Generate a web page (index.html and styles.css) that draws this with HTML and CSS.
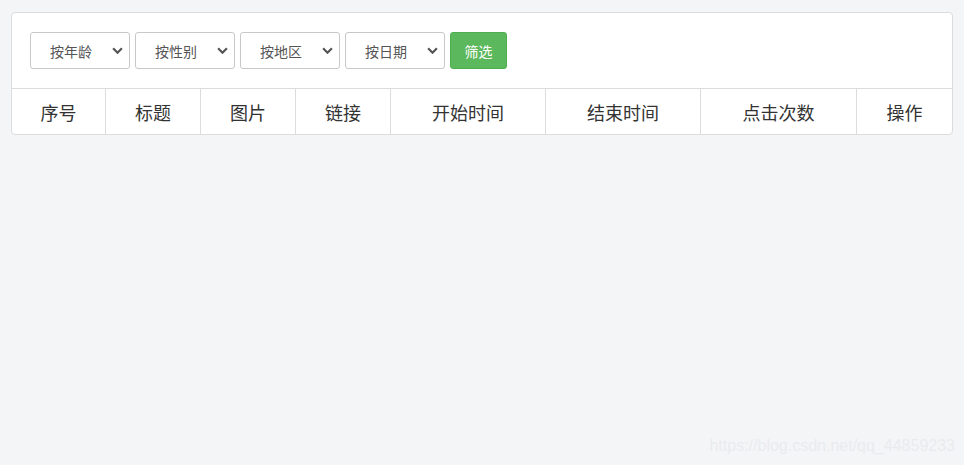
FILE: index.html
```html
<!DOCTYPE html>
<html lang="zh-CN">
<head>
    <meta charset="UTF-8">
    <meta name="viewport" content="width=device-width, initial-scale=1.0">
    <title>广告列表</title>
    <link rel="stylesheet" href="styles.css">
</head>
<body>
    <div class="panel">
        <div class="toolbar">
            <div class="select-box">
                <select><option>按年龄</option></select>
                <svg class="chevron" viewBox="0 0 10 6"><path d="M1 1l4 4 4-4" /></svg>
            </div>
            <div class="select-box">
                <select><option>按性别</option></select>
                <svg class="chevron" viewBox="0 0 10 6"><path d="M1 1l4 4 4-4" /></svg>
            </div>
            <div class="select-box">
                <select><option>按地区</option></select>
                <svg class="chevron" viewBox="0 0 10 6"><path d="M1 1l4 4 4-4" /></svg>
            </div>
            <div class="select-box">
                <select><option>按日期</option></select>
                <svg class="chevron" viewBox="0 0 10 6"><path d="M1 1l4 4 4-4" /></svg>
            </div>
            <button class="btn-filter">筛选</button>
        </div>
        <table class="list">
            <thead>
                <tr>
                    <th class="col-first">序号</th>
                    <th class="col-s">标题</th>
                    <th class="col-s">图片</th>
                    <th class="col-s">链接</th>
                    <th class="col-l">开始时间</th>
                    <th class="col-l">结束时间</th>
                    <th class="col-xl">点击次数</th>
                    <th>操作</th>
                </tr>
            </thead>
        </table>
    </div>
    <div class="watermark">https://blog.csdn.net/qq_44859233</div>
</body>
</html>
```

FILE: styles.css
```css
body {
    font-family: "Noto Sans CJK SC", "Noto Sans", sans-serif;
    background-color: #f4f5f7;
    margin: 0;
    padding: 12px 11px 0 11px;
    height: 465px;
    box-sizing: border-box;
    position: relative;
}
.panel {
    width: 942px;
    background-color: #fff;
    border: 1px solid #dcdcdc;
    border-radius: 4px;
    box-sizing: border-box;
    overflow: hidden;
}
.toolbar {
    display: flex;
    gap: 5px;
    padding: 19px 19px 19px 18px;
    border-bottom: 1px solid #dcdcdc;
}
.select-box {
    position: relative;
    width: 100px;
    height: 37px;
}
.select-box select {
    appearance: none;
    -webkit-appearance: none;
    width: 100%;
    height: 100%;
    border: 1px solid #c8c8c8;
    border-radius: 3px;
    background: #fff;
    color: #555;
    font-family: inherit;
    font-size: 14px;
    padding: 0 0 0 19px;
    outline: none;
}
.select-box .chevron {
    position: absolute;
    right: 7px;
    top: 15px;
    width: 11px;
    height: 7px;
    fill: none;
    stroke: #555;
    stroke-width: 2;
    pointer-events: none;
}
.btn-filter {
    width: 57px;
    height: 37px;
    border: 1px solid #4cae4c;
    border-radius: 3px;
    background-color: #5cb85c;
    color: #fff;
    font-family: inherit;
    font-size: 14px;
    padding: 0;
}
.list {
    width: 100%;
    border-collapse: collapse;
    table-layout: fixed;
}
.list th {
    height: 45px;
    padding: 0;
    font-size: 18px;
    font-weight: normal;
    color: #333;
    text-align: center;
    border-left: 1px solid #dcdcdc;
}
.list th:first-child {
    border-left: none;
}
.list .col-first {
    width: 93px;
}
.list .col-s {
    width: 94px;
}
.list .col-l {
    width: 154px;
}
.list .col-xl {
    width: 155px;
}
.watermark {
    position: absolute;
    right: 9px;
    bottom: 10px;
    font-family: "Liberation Sans", sans-serif;
    font-size: 16px;
    color: #eaebee;
}
```
